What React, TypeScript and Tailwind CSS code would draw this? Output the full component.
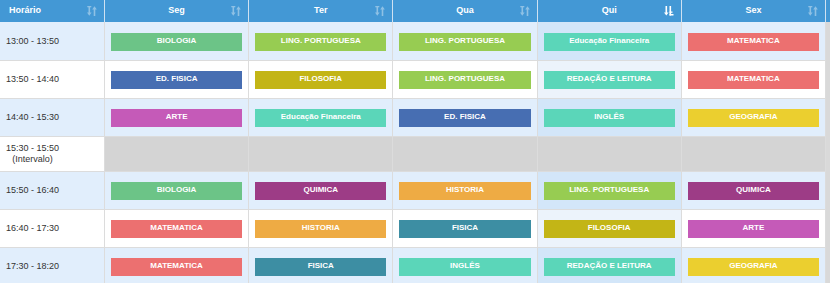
import React from "react";

const C: Record<string, string> = {
  BIOLOGIA: "bg-[#6cc487]",
  "LING. PORTUGUESA": "bg-[#97cc52]",
  "Educação Financeira": "bg-[#5bd6b9]",
  "REDAÇÃO E LEITURA": "bg-[#5bd6b9]",
  "INGLÊS": "bg-[#5bd6b9]",
  MATEMATICA: "bg-[#ec7070]",
  "ED. FISICA": "bg-[#476eb2]",
  FILOSOFIA: "bg-[#c3b516]",
  ARTE: "bg-[#c55ab8]",
  GEOGRAFIA: "bg-[#ebcf2f]",
  QUIMICA: "bg-[#9d3c86]",
  HISTORIA: "bg-[#eeab44]",
  FISICA: "bg-[#3d8ea3]",
};

type Row = { time: string; subjects?: string[]; h: string };

const rows: Row[] = [
  { time: "13:00 - 13:50", h: "h-[39px]", subjects: ["BIOLOGIA", "LING. PORTUGUESA", "LING. PORTUGUESA", "Educação Financeira", "MATEMATICA"] },
  { time: "13:50 - 14:40", h: "h-[38px]", subjects: ["ED. FISICA", "FILOSOFIA", "LING. PORTUGUESA", "REDAÇÃO E LEITURA", "MATEMATICA"] },
  { time: "14:40 - 15:30", h: "h-[38px]", subjects: ["ARTE", "Educação Financeira", "ED. FISICA", "INGLÊS", "GEOGRAFIA"] },
  { time: "15:30 - 15:50", h: "h-[35px]" },
  { time: "15:50 - 16:40", h: "h-[38px]", subjects: ["BIOLOGIA", "QUIMICA", "HISTORIA", "LING. PORTUGUESA", "QUIMICA"] },
  { time: "16:40 - 17:30", h: "h-[38px]", subjects: ["MATEMATICA", "HISTORIA", "FISICA", "FILOSOFIA", "ARTE"] },
  { time: "17:30 - 18:20", h: "h-[38px]", subjects: ["MATEMATICA", "FISICA", "INGLÊS", "REDAÇÃO E LEITURA", "GEOGRAFIA"] },
];

const SortIcon = ({ active }: { active?: boolean }) =>
  active ? (
    <svg width="10" height="10" viewBox="0 0 10 10" className="shrink-0">
      <rect x="1.5" y="0" width="1.6" height="7" fill="#fff" />
      <polygon points="0,6.5 4.6,6.5 2.3,9.5" fill="#fff" />
      <rect x="5.5" y="0" width="1.6" height="9.5" fill="#fff" />
      <rect x="5.5" y="8" width="4" height="1.5" fill="#fff" />
      <rect x="5.5" y="5.5" width="3" height="1.3" fill="#fff" />
    </svg>
  ) : (
    <svg width="10" height="10" viewBox="0 0 10 10" className="shrink-0 opacity-40">
      <rect x="1.5" y="0" width="1.6" height="7" fill="#fff" />
      <rect x="0.3" y="0" width="4" height="1.3" fill="#fff" />
      <polygon points="0,6.5 4.6,6.5 2.3,9.8" fill="#fff" />
      <rect x="6.7" y="3" width="1.6" height="7" fill="#fff" />
      <polygon points="5.2,3.5 9.8,3.5 7.5,0.2" fill="#fff" />
    </svg>
  );

const days = ["Seg", "Ter", "Qua", "Qui", "Sex"];

export default function App() {
  return (
    <div className="w-[830px] h-[283px] overflow-hidden bg-white" style={{ fontFamily: '"Liberation Sans", Arial, sans-serif' }}>
      <div className="flex h-[22px] bg-[#4398d5]">
        <div className="grid w-[826px] grid-cols-[105px_repeat(5,1fr)]">
          <div className="flex items-start justify-between border-r border-[#cfe2f2] pl-[9px] pr-[7px] pt-[6px]">
            <span className="text-[9px] font-bold leading-[9px] text-white">Horário</span>
            <SortIcon />
          </div>
          {days.map((d) => (
            <div key={d} className="relative flex items-start justify-center border-r border-[#cfe2f2] pt-[6px]">
              <span className="text-[9px] font-bold leading-[9px] text-white">{d}</span>
              <div className="absolute right-[7px] top-[6px]">
                <SortIcon active={d === "Qui"} />
              </div>
            </div>
          ))}
        </div>
        <div className="w-[4px]" />
      </div>
      <div className="flex">
        <div className="w-[826px]">
          {rows.map((r, i) => {
            const odd = i % 2 === 0;
            const rowBg = odd ? "bg-[#e1eefc]" : "bg-white";
            return (
              <div key={i} className={`grid grid-cols-[105px_repeat(5,1fr)] border-b border-[#dcdcdc] ${r.h}`}>
                <div className={`flex items-center border-r border-[#dcdcdc] pl-[6px] ${rowBg}`}>
                  {r.subjects ? (
                    <span className="text-[9px] leading-[9px] text-[#333]">{r.time}</span>
                  ) : (
                    <span className="inline-flex flex-col items-center text-[9px] leading-[11px] text-[#333]">
                      <span>{r.time}</span>
                      <span>(Intervalo)</span>
                    </span>
                  )}
                </div>
                {r.subjects
                  ? r.subjects.map((s, j) => {
                      const qui = j === 3;
                      const bg = qui ? (odd ? "bg-[#d3e6f9]" : "bg-[#ecf3fb]") : rowBg;
                      return (
                        <div key={j} className={`flex items-center border-r border-[#dcdcdc] px-[6px] pt-[1px] ${bg}`}>
                          <div className={`h-[18px] w-full text-center text-[8px] font-bold leading-[15px] text-white ${C[s]}`}>
                            {s}
                          </div>
                        </div>
                      );
                    })
                  : days.map((d) => <div key={d} className="border-r border-[#dcdcdc] bg-[#d4d4d4]" />)}
              </div>
            );
          })}
        </div>
        <div className="w-[4px] self-stretch bg-[#d9d9d9]" />
      </div>
    </div>
  );
}
